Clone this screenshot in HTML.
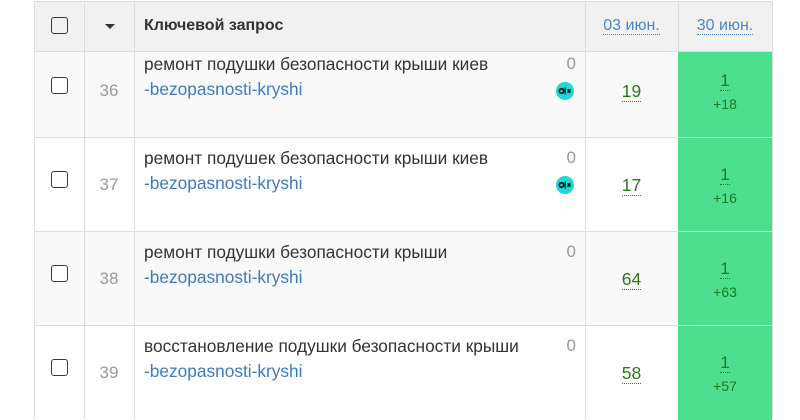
<!DOCTYPE html>
<html><head><meta charset="utf-8"><style>
*{box-sizing:border-box;margin:0;padding:0}
body{width:800px;height:417px;overflow:hidden;background:#fff;font-family:"Liberation Sans",Arial,sans-serif;position:relative}
.a{position:absolute}
.row{position:absolute;left:34px;width:739px;height:94px;border-top:1px solid #ddd}
.vl{position:absolute;top:0;bottom:0;width:1px;background:#ddd}
.cb{position:absolute;width:17px;height:17px;border:1.6px solid #3a3a3a;border-radius:3px;background:#fff}
.num{position:absolute;left:50px;width:50px;text-align:center;color:#999;font-size:17px}
.q{position:absolute;left:110px;font-size:17.3px;color:#333;white-space:nowrap}
.lk{position:absolute;left:110px;font-size:17.3px;color:#3b7bbf}
.z{position:absolute;left:510px;width:32px;text-align:right;font-size:17px;color:#999}
.ic{position:absolute;left:522px;width:18px;height:18px;border-radius:50%;background:#22d6d3}
.v{position:absolute;left:551px;width:93px;text-align:center;font-size:17.5px;color:#2a7a1a}
.v span{border-bottom:1px dotted #2a7a1a}
.g{position:absolute;left:644px;width:94px;top:0;height:94px;background:#4cdf8f}
.g1{position:absolute;width:94px;text-align:center;font-size:17px;color:#1e7a1e;line-height:18px}
.g1 span{border-bottom:1px dotted #1e7a1e}
.g2{position:absolute;width:94px;text-align:center;font-size:14px;color:#1e7a1e}
</style></head><body>
<svg width="0" height="0" style="position:absolute"><defs><g id="ico"><circle cx="9" cy="9" r="9" fill="#22d6d3"/><circle cx="5.5" cy="9" r="2.2" fill="none" stroke="#123" stroke-width="1.8"/><rect x="8.6" y="5.5" width="1.4" height="7" fill="#123"/><path d="M11.5 7.3l3 3.4M14.5 7.3l-3 3.4" stroke="#123" stroke-width="1.5"/></g></defs></svg>

<div class="row" style="top:43px;background:#f9f9f9">
 <div class="vl" style="left:0"></div><div class="vl" style="left:50px"></div><div class="vl" style="left:100px"></div><div class="vl" style="left:551px"></div><div class="vl" style="left:738px"></div>
 <div class="cb" style="left:17px;top:33px"></div>
 <div class="num" style="top:37px">36</div>
 <div class="q" style="top:10px">ремонт подушки безопасности крыши киев</div>
 <div class="lk" style="top:35px">-bezopasnosti-kryshi</div>
 <div class="z" style="top:10px">0</div>
 <svg class="a" style="left:522px;top:38px" width="18" height="18"><use href="#ico"/></svg>
 <div class="v" style="top:37px"><span>19</span></div>
 <div class="g"><div class="g1" style="top:28px"><span>1</span></div><div class="g2" style="top:52px">+18</div></div>
</div>

<div class="row" style="top:137px;background:#fff">
 <div class="vl" style="left:0"></div><div class="vl" style="left:50px"></div><div class="vl" style="left:100px"></div><div class="vl" style="left:551px"></div><div class="vl" style="left:738px"></div>
 <div class="cb" style="left:17px;top:33px"></div>
 <div class="num" style="top:37px">37</div>
 <div class="q" style="top:10px">ремонт подушек безопасности крыши киев</div>
 <div class="lk" style="top:35px">-bezopasnosti-kryshi</div>
 <div class="z" style="top:10px">0</div>
 <svg class="a" style="left:522px;top:38px" width="18" height="18"><use href="#ico"/></svg>
 <div class="v" style="top:37px"><span>17</span></div>
 <div class="g"><div class="g1" style="top:28px"><span>1</span></div><div class="g2" style="top:52px">+16</div></div>
</div>

<div class="row" style="top:231px;background:#f9f9f9">
 <div class="vl" style="left:0"></div><div class="vl" style="left:50px"></div><div class="vl" style="left:100px"></div><div class="vl" style="left:551px"></div><div class="vl" style="left:738px"></div>
 <div class="cb" style="left:17px;top:33px"></div>
 <div class="num" style="top:37px">38</div>
 <div class="q" style="top:10px">ремонт подушки безопасности крыши</div>
 <div class="lk" style="top:35px">-bezopasnosti-kryshi</div>
 <div class="z" style="top:10px">0</div>
 <div class="v" style="top:37px"><span>64</span></div>
 <div class="g"><div class="g1" style="top:28px"><span>1</span></div><div class="g2" style="top:52px">+63</div></div>
</div>

<div class="row" style="top:325px;background:#fff">
 <div class="vl" style="left:0"></div><div class="vl" style="left:50px"></div><div class="vl" style="left:100px"></div><div class="vl" style="left:551px"></div><div class="vl" style="left:738px"></div>
 <div class="cb" style="left:17px;top:33px"></div>
 <div class="num" style="top:37px">39</div>
 <div class="q" style="top:10px">восстановление подушки безопасности крыши</div>
 <div class="lk" style="top:35px">-bezopasnosti-kryshi</div>
 <div class="z" style="top:10px">0</div>
 <div class="v" style="top:37px"><span>58</span></div>
 <div class="g"><div class="g1" style="top:28px"><span>1</span></div><div class="g2" style="top:52px">+57</div></div>
</div>

<div class="a" style="left:34px;top:1px;width:739px;height:51px;background:#f1f1f1;border-top:1px solid #ddd;border-bottom:1px solid #ddd">
 <div class="vl" style="left:0"></div><div class="vl" style="left:50px"></div><div class="vl" style="left:100px"></div><div class="vl" style="left:551px"></div><div class="vl" style="left:644px"></div><div class="vl" style="left:738px"></div>
 <div class="cb" style="left:17px;top:15px;background:#f1f1f1"></div>
 <div class="a" style="left:71px;top:22px;width:0;height:0;border-left:5px solid transparent;border-right:5px solid transparent;border-top:5px solid #333"></div>
 <div class="a" style="left:110px;top:15px;font-size:16px;font-weight:bold;color:#333">Ключевой запрос</div>
 <div class="a" style="left:551px;width:93px;top:15px;text-align:center;font-size:16px;color:#4a86c5"><span style="border-bottom:1px dotted #4a86c5">03 июн.</span></div>
 <div class="a" style="left:644px;width:94px;top:15px;text-align:center;font-size:16px;color:#4a86c5"><span style="border-bottom:1px dotted #4a86c5">30 июн.</span></div>
</div>
</body></html>
